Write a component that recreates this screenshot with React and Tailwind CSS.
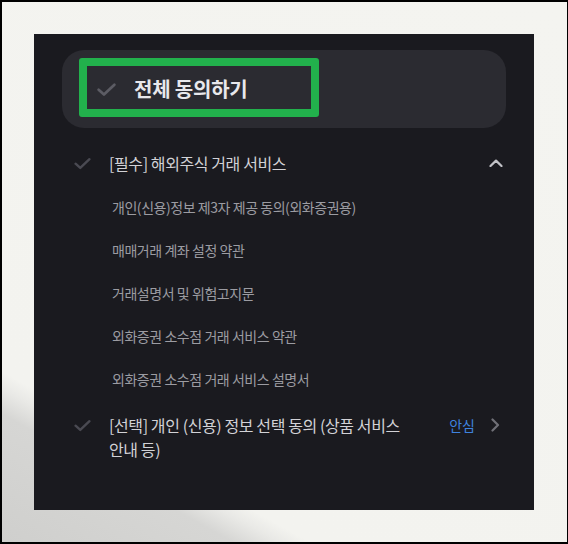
import React from 'react';

const subItems = [
  '개인(신용)정보 제3자 제공 동의(외화증권용)',
  '매매거래 계좌 설정 약관',
  '거래설명서 및 위험고지문',
  '외화증권 소수점 거래 서비스 약관',
  '외화증권 소수점 거래 서비스 설명서',
];

const Check = ({ className }) => (
  <svg viewBox="0 0 20 14" className={className} fill="none" stroke="currentColor" strokeWidth="2.6" strokeLinecap="round" strokeLinejoin="round">
    <path d="M2.5 7.2 L7.6 11.8 L17.5 2.4" />
  </svg>
);

const App = () => {
  return (
    <div
      className="w-[568px] h-[544px] overflow-hidden border-t-2 border-l-2 border-b-2 border-r border-black pt-[32px] pl-[32px] bg-[linear-gradient(29deg,#cfcfcd_0%,#d6d6d4_15%,#e9e9e6_18%,#f3f3ef_20%,#f4f4f0_100%)]"
      style={{ fontFamily: '"Noto Sans CJK KR", "Noto Sans", sans-serif' }}
    >
      <div className="w-[500px] h-[476px] bg-[#1a1a1f] px-[28px] pt-[16px]">
        {/* 전체 동의 */}
        <div className="relative h-[78px] rounded-[22px] bg-[#2b2b31] flex items-center pl-[34px] gap-[17px]">
          <Check className="w-[21px] h-[15px] text-[#5c5c64]" />
          <span className="text-[20px] font-bold text-[#e8e8ec] tracking-[-0.2px]">전체 동의하기</span>
          <div className="absolute left-[17px] top-[8px] w-[240px] h-[59px] border-[8px] border-[#22b14c] rounded-[3px]" />
        </div>

        <div className="pl-[11px] pr-[3px]">
          <div className="mt-[24px] h-[22px] flex items-center">
            <Check className="w-[19px] h-[13px] text-[#4a4a52]" />
            <span className="ml-[17px] text-[16px] tracking-[-0.4px] text-[#d2d2d6]">[필수] 해외주식 거래 서비스</span>
            <svg viewBox="0 0 14 8" className="ml-auto w-[14px] h-[8px] text-[#c2c2c7]" fill="none" stroke="currentColor" strokeWidth="2.2" strokeLinecap="round" strokeLinejoin="round">
              <path d="M1.5 7 L7 1.6 L12.5 7" />
            </svg>
          </div>

          <ul className="mt-[12px] pl-[39px]">
            {subItems.map((t) => (
              <li key={t} className="h-[43px] flex items-center text-[14px] tracking-[-0.45px] text-[#9c9ca2]">{t}</li>
            ))}
          </ul>

          <div className="mt-[12px] flex items-start">
            <Check className="mt-[6px] w-[19px] h-[13px] text-[#4a4a52]" />
            <p className="ml-[17px] w-[300px] text-[16px] leading-[24px] tracking-[-0.4px] text-[#d2d2d6]">
              [선택] 개인 (신용) 정보 선택 동의 (상품 서비스 안내 등)
            </p>
            <span className="ml-auto text-[14px] leading-[24px] text-[#3f82de]">안심</span>
            <svg viewBox="0 0 9 14" className="ml-[16px] mr-[3px] mt-[5px] w-[9px] h-[14px] text-[#707077]" fill="none" stroke="currentColor" strokeWidth="2.2" strokeLinecap="round" strokeLinejoin="round">
              <path d="M1.5 1.5 L7 7 L1.5 12.5" />
            </svg>
          </div>
        </div>
      </div>
    </div>
  );
};

export default App;
